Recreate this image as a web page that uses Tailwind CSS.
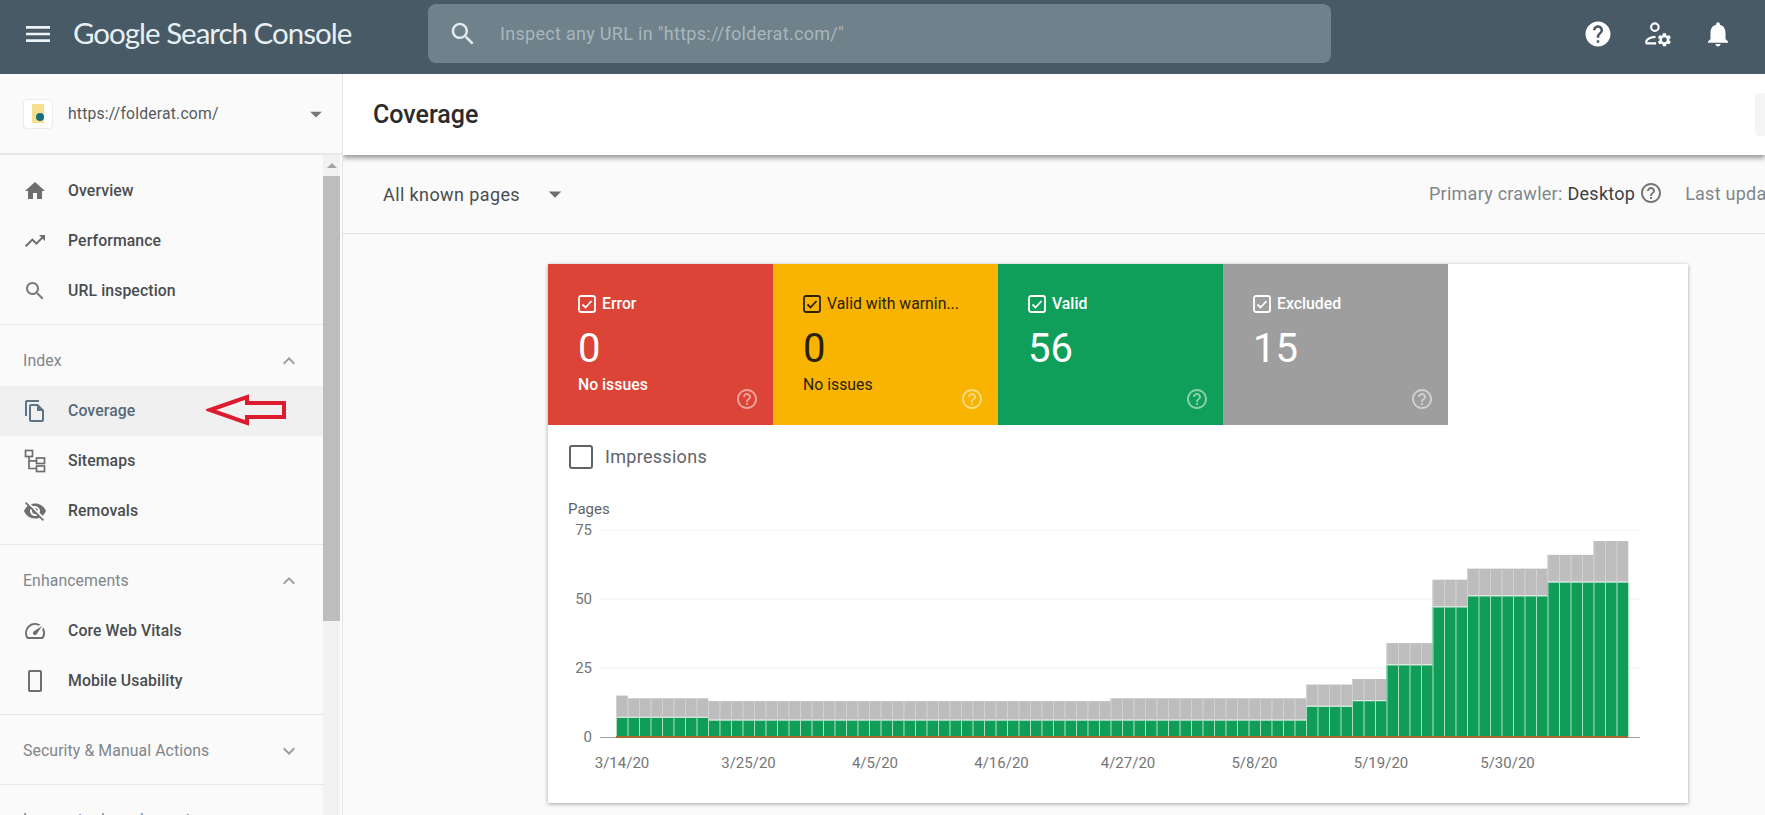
<!DOCTYPE html>
<html lang="en">
  <head>
    <meta charset="UTF-8" />
    <title>Coverage - Google Search Console</title>
    <script src="https://cdn.jsdelivr.net/npm/@tailwindcss/browser@4"></script>
  </head>
  <body class="h-screen w-full overflow-hidden flex flex-col bg-[#fafafa] font-[Roboto,sans-serif]">
    <!-- top bar -->
    <header class="h-[74px] shrink-0 bg-[#475a65] flex items-center pb-[7px]">
      <svg class="w-[32px] h-[32px] ml-[22px] fill-[#eef3f5]" viewBox="0 0 24 24"><path d="M3 18h18v-2H3v2zm0-5h18v-2H3v2zm0-7v2h18V6H3z" /></svg>
      <div class="ml-[19px] w-[355px] text-[#e8eff2] text-[29.5px] font-[Lato,sans-serif] tracking-[-1px] whitespace-nowrap">Google Search Console</div>
      <div class="w-[903px] h-[59px] rounded-lg bg-[#6f828c] flex items-center">
        <svg class="w-[30px] h-[30px] ml-[20px] fill-[#e4eaed]" viewBox="0 0 24 24"><path d="M15.5 14h-.79l-.28-.27C15.41 12.59 16 11.11 16 9.5 16 5.91 13.09 3 9.5 3S3 5.91 3 9.5 5.91 16 9.5 16c1.61 0 3.09-.59 4.23-1.57l.27.28v.79l5 4.99L20.49 19l-4.99-5zm-6 0C7.01 14 5 11.99 5 9.5S7.01 5 9.5 5 14 7.01 14 9.5 11.99 14 9.5 14z" /></svg>
        <span class="ml-[22px] text-[18px] tracking-[0.3px] text-[#a9b6bc]">Inspect any URL in "https://folderat.com/"</span>
      </div>
      <div class="ml-auto mr-[32px] flex items-center gap-[30px]">
        <svg class="w-[30px] h-[30px] fill-white" viewBox="0 0 24 24"><path d="M12 2C6.48 2 2 6.48 2 12s4.48 10 10 10 10-4.48 10-10S17.52 2 12 2zm1 17h-2v-2h2v2zm2.07-7.75l-.9.92C13.45 12.9 13 13.5 13 15h-2v-.5c0-1.1.45-2.1 1.17-2.83l1.24-1.26c.37-.36.59-.86.59-1.41 0-1.1-.9-2-2-2s-2 .9-2 2H8c0-2.21 1.79-4 4-4s4 1.79 4 4c0 .88-.36 1.68-.93 2.25z" /></svg>
        <svg class="w-[30px] h-[30px] fill-none stroke-white" viewBox="0 0 24 24">
          <circle cx="9.5" cy="6.5" r="3" stroke-width="1.7" />
          <path d="M2.5 19.5h8M2.5 19.5v-.8c0-2.6 3.5-4 7.5-4.4" stroke-width="1.7" />
          <g transform="translate(10.5 10) scale(0.55)"><path class="fill-white stroke-none" d="M19.14 12.94c.04-.3.06-.61.06-.94 0-.32-.02-.64-.07-.94l2.03-1.58c.18-.14.23-.41.12-.61l-1.92-3.32c-.12-.22-.37-.29-.59-.22l-2.39.96c-.5-.38-1.03-.7-1.62-.94l-.36-2.54c-.04-.24-.24-.41-.48-.41h-3.84c-.24 0-.43.17-.47.41l-.36 2.54c-.59.24-1.13.57-1.62.94l-2.39-.96c-.22-.08-.47 0-.59.22L2.74 8.87c-.12.21-.08.47.12.61l2.03 1.58c-.05.3-.09.63-.09.94s.02.64.07.94l-2.03 1.58c-.18.14-.23.41-.12.61l1.92 3.32c.12.22.37.29.59.22l2.39-.96c.5.38 1.03.7 1.62.94l.36 2.54c.05.24.24.41.48.41h3.84c.24 0 .44-.17.47-.41l.36-2.54c.59-.24 1.13-.56 1.62-.94l2.39.96c.22.08.47 0 .59-.22l1.92-3.32c.12-.22.07-.47-.12-.61l-2.01-1.58zM12 15.6c-1.98 0-3.6-1.62-3.6-3.6s1.62-3.6 3.6-3.6 3.6 1.62 3.6 3.6-1.62 3.6-3.6 3.6z" /></g>
        </svg>
        <svg class="w-[30px] h-[30px] fill-white" viewBox="0 0 24 24"><path d="M12 22c1.1 0 2-.9 2-2h-4c0 1.1.89 2 2 2zm6-6v-5c0-3.07-1.64-5.64-4.5-6.32V4c0-.83-.67-1.5-1.5-1.5s-1.5.67-1.5 1.5v.68C7.63 5.36 6 7.92 6 11v5l-2 2v1h16v-1l-2-2z" /></svg>
      </div>
    </header>

    <div class="flex flex-1 min-h-0">
      <!-- sidebar -->
      <aside class="w-[343px] shrink-0 flex flex-col border-r border-[#e3e3e3] bg-[#fafafa]">
        <div class="h-[81px] shrink-0 flex items-center border-b-2 border-[#e8e8e8] pl-[23px] pr-[12px]">
          <div class="w-[30px] h-[30px] rounded-sm bg-white border border-[#ececec] flex items-center justify-center">
            <div class="relative w-[12px] h-[19px] bg-[#f6e08e]">
              <div class="absolute left-[4px] top-[9px] w-[8px] h-[8px] rounded-full bg-[#15707a]"></div>
            </div>
          </div>
          <span class="ml-[15px] text-[15.7px] tracking-[0.2px] text-[#55585b]">https://folderat.com/</span>
          <svg class="ml-auto w-[28px] h-[28px] fill-[#757575]" viewBox="0 0 24 24"><path d="M7 10l5 5 5-5z" /></svg>
        </div>
        <div class="flex flex-1 min-h-0 overflow-hidden">
          <nav class="w-[323px] shrink-0 text-[15.8px] font-medium tracking-[0.1px] text-[#4a4d50]">
            <div class="pt-[11px] pb-[8px] border-b border-[#e6e6e6]">
              <a class="h-[50px] flex items-center pl-[23px]">
                <svg class="w-[24px] h-[24px] fill-[#6e6e6e]" viewBox="0 0 24 24"><path d="M10 20v-6h4v6h5v-8h3L12 3 2 12h3v8z" /></svg>
                <span class="ml-[21px]">Overview</span>
              </a>
              <a class="h-[50px] flex items-center pl-[23px]">
                <svg class="w-[24px] h-[24px] fill-[#6e6e6e]" viewBox="0 0 24 24"><path d="M16 6l2.29 2.29-4.88 4.88-4-4L2 16.59 3.41 18l6-6 4 4 6.3-6.29L22 12V6z" /></svg>
                <span class="ml-[21px]">Performance</span>
              </a>
              <a class="h-[50px] flex items-center pl-[23px]">
                <svg class="w-[24px] h-[24px] fill-[#7a7a7a]" viewBox="0 0 24 24"><path d="M15.5 14h-.79l-.28-.27C15.41 12.59 16 11.11 16 9.5 16 5.91 13.09 3 9.5 3S3 5.91 3 9.5 5.91 16 9.5 16c1.61 0 3.09-.59 4.23-1.57l.27.28v.79l5 4.99L20.49 19l-4.99-5zm-6 0C7.01 14 5 11.99 5 9.5S7.01 5 9.5 5 14 7.01 14 9.5 11.99 14 9.5 14z" /></svg>
                <span class="ml-[21px]">URL inspection</span>
              </a>
            </div>
            <div class="pb-[8px] border-b border-[#e6e6e6]">
              <div class="h-[61px] pt-[11px] flex items-center pl-[23px] pr-[22px] text-[#80868b] font-normal">
                <span>Index</span>
                <svg class="ml-auto w-[24px] h-[24px] fill-[#9e9e9e]" viewBox="0 0 24 24"><path d="M12 8l-6 6 1.41 1.41L12 10.83l4.59 4.58L18 14z" /></svg>
              </div>
              <a class="relative h-[50px] flex items-center pl-[23px] bg-[#f0f0f0] text-[#56697a]">
                <svg class="w-[24px] h-[24px] fill-[#5f7482]" viewBox="0 0 24 24"><path d="M16 1H4c-1.1 0-2 .9-2 2v14h2V3h12V1zm-1 4H8c-1.1 0-1.99.9-1.99 2L6 21c0 1.1.89 2 1.99 2H19c1.1 0 2-.9 2-2V11l-6-6zM8 21V7h6v5h5v9H8z" /></svg>
                <span class="ml-[21px]">Coverage</span>
                <!-- red arrow drawn over the row -->
                <svg class="absolute left-[206px] top-[7px] w-[82px] h-[34px] fill-none stroke-[#dc1c2e]" viewBox="0 0 82 34"><path d="M4 17L41 4v6h37v14H41v6z" stroke-width="4" /></svg>
              </a>
              <a class="h-[50px] flex items-center pl-[23px]">
                <svg class="w-[24px] h-[24px] fill-none stroke-[#6e6e6e]" viewBox="0 0 24 24" stroke-width="1.7"><rect x="2.5" y="1.5" width="7" height="6" /><rect x="13.5" y="9" width="8" height="5.5" /><rect x="13.5" y="17" width="8" height="5.5" /><path d="M6 7.5V19.5H13.5M6 11.8H13.5" /></svg>
                <span class="ml-[21px]">Sitemaps</span>
              </a>
              <a class="h-[50px] flex items-center pl-[23px]">
                <svg class="w-[24px] h-[24px] fill-[#6e6e6e]" viewBox="0 0 24 24"><path d="M12 7c2.76 0 5 2.24 5 5 0 .65-.13 1.26-.36 1.83l2.92 2.92c1.51-1.26 2.7-2.89 3.43-4.75-1.73-4.39-6-7.5-11-7.5-1.4 0-2.74.25-3.98.7l2.16 2.16C10.74 7.13 11.35 7 12 7zM2 4.27l2.28 2.28.46.46C3.08 8.3 1.78 10.02 1 12c1.73 4.39 6 7.5 11 7.5 1.55 0 3.03-.3 4.38-.84l.42.42L19.73 22 21 20.73 3.27 3 2 4.27zM7.53 9.8l1.55 1.55c-.05.21-.08.43-.08.65 0 1.66 1.34 3 3 3 .22 0 .44-.03.65-.08l1.55 1.55c-.67.33-1.41.53-2.2.53-2.76 0-5-2.24-5-5 0-.79.2-1.53.53-2.2zm4.31-.78l3.15 3.15.02-.16c0-1.66-1.34-3-3-3l-.17.01z" /></svg>
                <span class="ml-[21px]">Removals</span>
              </a>
            </div>
            <div class="pb-[8px] border-b border-[#e6e6e6]">
              <div class="h-[61px] pt-[11px] flex items-center pl-[23px] pr-[22px] text-[#80868b] font-normal">
                <span>Enhancements</span>
                <svg class="ml-auto w-[24px] h-[24px] fill-[#9e9e9e]" viewBox="0 0 24 24"><path d="M12 8l-6 6 1.41 1.41L12 10.83l4.59 4.58L18 14z" /></svg>
              </div>
              <a class="h-[50px] flex items-center pl-[23px]">
                <svg class="w-[24px] h-[24px] fill-[#6e6e6e]" viewBox="0 0 24 24"><path d="M20.38 8.57l-1.23 1.85a8 8 0 0 1-.22 7.58H5.07A8 8 0 0 1 15.58 6.85l1.85-1.23A10 10 0 0 0 3.35 19a2 2 0 0 0 1.72 1h13.85a2 2 0 0 0 1.74-1 10 10 0 0 0-.27-10.44zm-9.79 6.84a2 2 0 0 0 2.83 0l5.66-8.49-8.49 5.66a2 2 0 0 0 0 2.83z" /></svg>
                <span class="ml-[21px]">Core Web Vitals</span>
              </a>
              <a class="h-[50px] flex items-center pl-[23px]">
                <svg class="w-[24px] h-[24px] fill-[#6e6e6e]" viewBox="0 0 24 24"><path d="M17 1H7c-1.1 0-2 .9-2 2v18c0 1.1.9 2 2 2h10c1.1 0 2-.9 2-2V3c0-1.1-.9-2-2-2zm0 20H7V3h10z" /></svg>
                <span class="ml-[21px]">Mobile Usability</span>
              </a>
            </div>
            <div class="h-[70px] pt-[2px] flex items-center pl-[23px] pr-[22px] border-b border-[#e6e6e6] text-[#80868b] font-normal">
              <span>Security &amp; Manual Actions</span>
              <svg class="ml-auto w-[24px] h-[24px] fill-[#9e9e9e]" viewBox="0 0 24 24"><path d="M16.59 8.59L12 13.17 7.41 8.59 6 10l6 6 6-6z" /></svg>
            </div>
            <div class="h-[70px] flex items-center pl-[23px] text-[#80868b] font-normal">Legacy tools and reports</div>
          </nav>
          <!-- scrollbar -->
          <div class="w-[17px] shrink-0 bg-[#f1f1f1] flex flex-col items-center">
            <div class="h-[21px] flex items-center"><div class="w-0 h-0 border-x-[5px] border-x-transparent border-b-[5px] border-b-[#a3a3a3]"></div></div>
            <div class="w-full h-[445px] bg-[#bdbdbd]"></div>
          </div>
        </div>
      </aside>

      <!-- main -->
      <main class="flex-1 min-w-0 flex flex-col overflow-hidden">
        <div class="relative h-[81px] shrink-0 bg-white shadow-[0_3px_5px_rgba(0,0,0,0.4)] flex items-center pl-[30px]">
          <h1 class="text-[25px] font-medium text-[#2a2b2d]">Coverage</h1>
          <div class="ml-auto w-[10px] h-[43px] rounded-l bg-[#f5f5f5]"></div>
        </div>
        <div class="h-[79px] shrink-0 flex items-center border-b border-[#e0e0e0] pl-[40px] whitespace-nowrap">
          <span class="text-[18px] tracking-[0.4px] text-[#4a4d50]">All known pages</span>
          <svg class="ml-[20px] w-[30px] h-[30px] fill-[#6e6e6e]" viewBox="0 0 24 24"><path d="M7 10l5 5 5-5z" /></svg>
          <div class="ml-auto pb-[2px] flex items-center text-[18px] tracking-[0.25px] text-[#80868b] w-[336px] shrink-0 overflow-hidden">
            <span>Primary crawler:</span>
            <span class="ml-[5px] text-[#3c4043]">Desktop</span>
            <svg class="ml-[4px] w-[24px] h-[24px] shrink-0 fill-[#757575]" viewBox="0 0 24 24"><path d="M11 18h2v-2h-2v2zm1-16C6.48 2 2 6.48 2 12s4.48 10 10 10 10-4.48 10-10S17.52 2 12 2zm0 18c-4.41 0-8-3.59-8-8s3.59-8 8-8 8 3.59 8 8-3.59 8-8 8zm0-14c-2.21 0-4 1.79-4 4h2c0-1.1.9-2 2-2s2 .9 2 2c0 2-3 1.75-3 5h2c0-2.25 3-2.5 3-5 0-2.21-1.79-4-4-4z" /></svg>
            <span class="ml-[22px]">Last updated: 6/9/20</span>
          </div>
        </div>

        <div class="pt-[30px] pl-[205px]">
          <section class="w-[1140px] h-[539px] bg-white shadow-[0_1px_4px_rgba(0,0,0,0.35)]">
            <div class="flex h-[161px]">
              <div class="relative w-[225px] bg-[#db4437] text-white pt-[30px] pl-[30px]">
                <div class="flex items-center h-[20px] text-[15.8px] font-medium">
                  <svg class="w-[18px] h-[18px] fill-none stroke-current" viewBox="0 0 18 18" stroke-width="1.8"><rect x="1" y="1" width="16" height="16" rx="2" /><path d="M4.5 9.5l3 3 6-6.500" /></svg>
                  <span class="ml-[6px]">Error</span>
                </div>
                <div class="text-[40px] leading-[47px] mt-[11px]">0</div>
                <div class="text-[15.8px] font-medium leading-[20px] mt-[3px]">No issues</div>
                <svg class="absolute right-[14px] bottom-[14px] w-[24px] h-[24px] fill-white/50" viewBox="0 0 24 24"><path d="M11 18h2v-2h-2v2zm1-16C6.48 2 2 6.48 2 12s4.48 10 10 10 10-4.48 10-10S17.52 2 12 2zm0 18c-4.41 0-8-3.59-8-8s3.59-8 8-8 8 3.59 8 8-3.59 8-8 8zm0-14c-2.21 0-4 1.79-4 4h2c0-1.1.9-2 2-2s2 .9 2 2c0 2-3 1.75-3 5h2c0-2.25 3-2.5 3-5 0-2.21-1.79-4-4-4z" /></svg>
              </div>
              <div class="relative w-[225px] bg-[#f8b400] text-[#2a2106] pt-[30px] pl-[30px]">
                <div class="flex items-center h-[20px] text-[15.8px]">
                  <svg class="w-[18px] h-[18px] fill-none stroke-current" viewBox="0 0 18 18" stroke-width="1.8"><rect x="1" y="1" width="16" height="16" rx="2" /><path d="M4.5 9.5l3 3 6-6.500" /></svg>
                  <span class="ml-[6px]">Valid with warnin...</span>
                </div>
                <div class="text-[40px] leading-[47px] mt-[11px]">0</div>
                <div class="text-[15.8px] leading-[20px] mt-[3px]">No issues</div>
                <svg class="absolute right-[14px] bottom-[14px] w-[24px] h-[24px] fill-white/50" viewBox="0 0 24 24"><path d="M11 18h2v-2h-2v2zm1-16C6.48 2 2 6.48 2 12s4.48 10 10 10 10-4.48 10-10S17.52 2 12 2zm0 18c-4.41 0-8-3.59-8-8s3.59-8 8-8 8 3.59 8 8-3.59 8-8 8zm0-14c-2.21 0-4 1.79-4 4h2c0-1.1.9-2 2-2s2 .9 2 2c0 2-3 1.75-3 5h2c0-2.25 3-2.5 3-5 0-2.21-1.79-4-4-4z" /></svg>
              </div>
              <div class="relative w-[225px] bg-[#109f5a] text-white pt-[30px] pl-[30px]">
                <div class="flex items-center h-[20px] text-[15.8px] font-medium">
                  <svg class="w-[18px] h-[18px] fill-none stroke-current" viewBox="0 0 18 18" stroke-width="1.8"><rect x="1" y="1" width="16" height="16" rx="2" /><path d="M4.5 9.5l3 3 6-6.500" /></svg>
                  <span class="ml-[6px]">Valid</span>
                </div>
                <div class="text-[40px] leading-[47px] mt-[11px]">56</div>
                <svg class="absolute right-[14px] bottom-[14px] w-[24px] h-[24px] fill-white/50" viewBox="0 0 24 24"><path d="M11 18h2v-2h-2v2zm1-16C6.48 2 2 6.48 2 12s4.48 10 10 10 10-4.48 10-10S17.52 2 12 2zm0 18c-4.41 0-8-3.59-8-8s3.59-8 8-8 8 3.59 8 8-3.59 8-8 8zm0-14c-2.21 0-4 1.79-4 4h2c0-1.1.9-2 2-2s2 .9 2 2c0 2-3 1.75-3 5h2c0-2.25 3-2.5 3-5 0-2.21-1.79-4-4-4z" /></svg>
              </div>
              <div class="relative w-[225px] bg-[#9e9e9e] text-white pt-[30px] pl-[30px]">
                <div class="flex items-center h-[20px] text-[15.8px] font-medium">
                  <svg class="w-[18px] h-[18px] fill-none stroke-current" viewBox="0 0 18 18" stroke-width="1.8"><rect x="1" y="1" width="16" height="16" rx="2" /><path d="M4.5 9.5l3 3 6-6.500" /></svg>
                  <span class="ml-[6px]">Excluded</span>
                </div>
                <div class="text-[40px] leading-[47px] mt-[11px]">15</div>
                <svg class="absolute right-[14px] bottom-[14px] w-[24px] h-[24px] fill-white/50" viewBox="0 0 24 24"><path d="M11 18h2v-2h-2v2zm1-16C6.48 2 2 6.48 2 12s4.48 10 10 10 10-4.48 10-10S17.52 2 12 2zm0 18c-4.41 0-8-3.59-8-8s3.59-8 8-8 8 3.59 8 8-3.59 8-8 8zm0-14c-2.21 0-4 1.79-4 4h2c0-1.1.9-2 2-2s2 .9 2 2c0 2-3 1.75-3 5h2c0-2.25 3-2.5 3-5 0-2.21-1.79-4-4-4z" /></svg>
              </div>
            </div>
            <div class="h-[70px] flex items-center pl-[21px] pb-[7px]">
              <div class="w-[24px] h-[24px] rounded-[3px] border-2 border-[#5f6368]"></div>
              <span class="ml-[12px] text-[18px] tracking-[0.3px] text-[#5f6368]">Impressions</span>
            </div>
            <!-- viewBox uses page coordinates so the numbers below read off the screenshot -->
            <svg id="chart" class="block w-[1140px] h-[308px] font-[Roboto,sans-serif]" viewBox="548 495 1140 308">
              <text x="568" y="514" class="fill-[#5f6368] text-[15px]">Pages</text>
            </svg>
          </section>
        </div>
      </main>
    </div>

    <script>
      const svgNs = "http://www.w3.org/2000/svg";
      const chart = document.getElementById("chart");
      const baseY = 737;
      const perPage = 2.76;
      const barW = 1012 / 88;

      function add(tag, attrs, text) {
        const el = document.createElementNS(svgNs, tag);
        for (const k in attrs) el.setAttribute(k, attrs[k]);
        if (text) el.textContent = text;
        chart.appendChild(el);
      }

      // [number of days, valid, total]
      const runs = [
        [1, 7, 15], [7, 7, 14], [35, 6, 13], [17, 6, 14], [4, 11, 19], [3, 13, 21],
        [4, 26, 34], [3, 47, 57], [7, 51, 61], [4, 56, 66], [3, 56, 71],
      ];

      [75, 50, 25].forEach((v) => {
        const y = baseY - v * perPage;
        add("line", { x1: 600, x2: 1640, y1: y, y2: y, stroke: "#f1f1f1" });
        add("text", { x: 592, y: y + 5, "text-anchor": "end", fill: "#757575", "font-size": 15 }, String(v));
      });
      add("text", { x: 592, y: baseY + 5, "text-anchor": "end", fill: "#757575", "font-size": 15 }, "0");
      add("line", { x1: 600, x2: 1640, y1: baseY + 0.5, y2: baseY + 0.5, stroke: "#9e9e9e" });

      let i = 0;
      runs.forEach(([days, valid, total]) => {
        for (let d = 0; d < days; d++, i++) {
          const x = 616 + i * barW;
          const gTop = baseY - valid * perPage;
          const tTop = baseY - total * perPage;
          add("rect", { x, y: tTop, width: barW + 0.3, height: gTop - tTop, fill: "#bdbdbd" });
          add("rect", { x, y: gTop, width: barW + 0.3, height: baseY - gTop, fill: "#0f9d58" });
          add("rect", { x, y: gTop - 1, width: barW + 0.3, height: 1, fill: "#e6f5ec" });
          add("rect", { x, y: tTop, width: 1, height: gTop - tTop, fill: "#d2d2d2" });
          add("rect", { x, y: gTop, width: 1, height: baseY - gTop, fill: "#a8dec2" });
        }
      });
      add("rect", { x: 616, y: baseY - 1, width: 1012, height: 2, fill: "#a9682f" });

      ["3/14/20", "3/25/20", "4/5/20", "4/16/20", "4/27/20", "5/8/20", "5/19/20", "5/30/20"].forEach((label, n) => {
        add("text", { x: 622 + n * 126.5, y: 768, "text-anchor": "middle", fill: "#757575", "font-size": 15 }, label);
      });
    </script>
  </body>
</html>
